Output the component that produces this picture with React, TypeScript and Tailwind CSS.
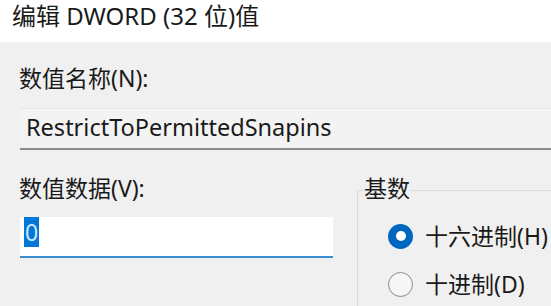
export default function App() {
  const font = { fontFamily: '"Noto Sans", "Noto Sans CJK SC", sans-serif' };
  return (
    <div className="w-[551px] h-[306px] overflow-hidden bg-[#f0f0f0] text-[#1a1a1a]" style={font}>
      <div className="h-[42px] bg-white pl-[12px] text-[24px] leading-[32px]">编辑 DWORD (32 位)值</div>
      <div className="pl-[20px]">
        <div className="pt-[21px] text-[23px] leading-[30px] -ml-[1px]">数值名称(N):</div>
        <div className="mt-[15px] h-[42px] border-t border-[#e6e6e6] border-b-2 border-b-[#8c8c8c] bg-[#f3f3f3] pl-[6px] text-[23.5px] leading-[36px]">
          RestrictToPermittedSnapins
        </div>
        <div className="flex mt-[23px]">
          <div className="w-[313px]">
            <div className="text-[23px] leading-[30px] -ml-[1px]">数值数据(V):</div>
            <div className="mt-[14px] h-[41px] bg-white border-b-2 border-b-[#3c8dd0] pl-[4px] rounded-t-[2px]">
              <span className="inline-block bg-[#0078d7] text-[#cfe6ff] text-[23px] leading-[30px] px-[1px]">0</span>
            </div>
          </div>
          <div className="ml-[24px] flex-1 relative">
            <div className="absolute left-0 right-0 top-[17px] bottom-[-20px] border-l border-t border-[#dcdcdc]"></div>
            <div className="relative ml-[7px] text-[23px] leading-[30px] bg-[#f0f0f0] inline-block">基数</div>
            <div className="relative pl-[31px] mt-[19px] flex flex-col gap-[20px]">
              <div className="flex items-center gap-[12px] text-[23px] leading-[28px] whitespace-nowrap">
                <span className="shrink-0 w-[25px] h-[25px] rounded-full bg-[#0067c0] flex items-center justify-center">
                  <span className="w-[10px] h-[10px] rounded-full bg-white"></span>
                </span>
                十六进制(H)
              </div>
              <div className="flex items-center gap-[12px] text-[23px] leading-[28px] whitespace-nowrap">
                <span className="shrink-0 w-[25px] h-[25px] rounded-full border-[1.5px] border-[#8a8a8a] bg-[#f6f6f6]"></span>
                十进制(D)
              </div>
            </div>
          </div>
        </div>
      </div>
    </div>
  );
}
